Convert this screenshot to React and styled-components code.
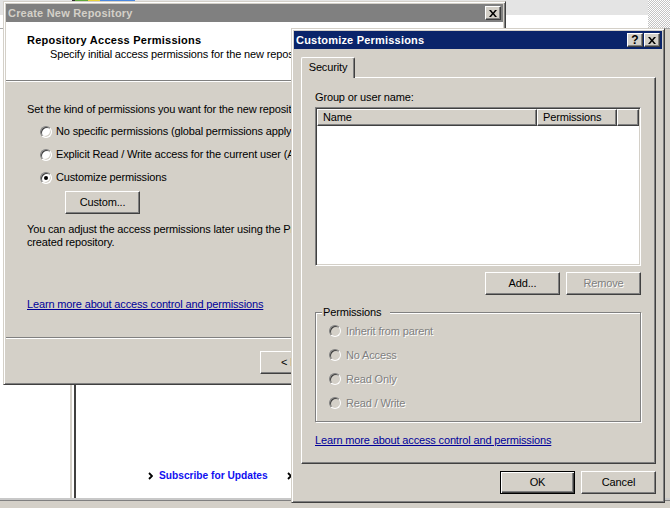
import React from 'react';
import styled, { createGlobalStyle } from 'styled-components';

const colors = {
  face: '#d4d0c8',
  shadow: '#808080',
  dark: '#404040',
  light: '#ffffff',
  navy: '#0a246a',
  link: '#000099',
  bright: '#1010f0',
};

const GlobalStyle = createGlobalStyle`
  html, body {
    margin: 0;
    padding: 0;
    background: ${colors.face};
  }
  body {
    font-family: 'Liberation Sans', Arial, sans-serif;
    font-size: 11px;
    line-height: 13px;
    letter-spacing: -0.15px;
    color: #000;
  }
  * {
    box-sizing: border-box;
  }
`;

const Desktop = styled.div`
  position: relative;
  width: 670px;
  height: 508px;
  overflow: hidden;
  background: ${colors.face};
`;

/* ---- application behind the dialogs ---- */

const Backdrop = styled.div`
  display: flex;
  flex-direction: column;
  height: 100%;
`;

const TopBand = styled.div`
  height: 29px;
  flex: none;
  display: flex;
  align-items: flex-start;
  background: linear-gradient(#e4e4e4 0 15px, #fff 15px);
  border-bottom: 1px solid #a8a8a8;
`;

const IconStrip = styled.div`
  margin-left: 72px;
  width: 63px;
  height: 3px;
  background: linear-gradient(90deg, #303030 0 3px, #5fa83a 3px 16px, #e8d23a 16px 28px, #4a88e0 28px);
`;

const Checker = styled.div`
  margin-left: auto;
  width: 22px;
  height: 100%;
  background: repeating-conic-gradient(#c4c4c4 0 25%, #fff 0 50%) 0 0 / 2px 2px;
`;

const BgBody = styled.div`
  flex: 1;
  display: flex;
  background: #fff;
  border-bottom: 2px solid #c8c8c8;
`;

const Sidebar = styled.div`
  width: 72px;
  flex: none;
  border-right: 2px solid ${colors.face};
  margin-right: 2px;
`;

const MainPane = styled.div`
  flex: 1;
  display: flex;
  align-items: flex-end;
  border-left: 2px solid ${colors.dark};
  padding: 0 0 16px 72px;
`;

const RightRail = styled.div`
  width: 5px;
  flex: none;
  background: ${colors.face};
`;

const StatusBand = styled.div`
  height: 8px;
  flex: none;
  background: ${colors.face};
  border-top: 1px solid ${colors.shadow};
`;

const Promo = styled.div`
  display: flex;
  align-items: center;
  gap: 6px;
`;

const PromoLink = styled.a`
  color: ${colors.bright};
  font-weight: bold;
  font-size: 10.2px;
  letter-spacing: 0;
  text-decoration: none;
  margin-right: 13px;
`;

const Chevron = () => (
  <svg width="5" height="8" viewBox="0 0 5 8">
    <polyline points="1,1 4,4 1,7" fill="none" stroke="#000" strokeWidth="1.8" />
  </svg>
);

/* ---- window chrome ---- */

const Window = styled.div`
  position: absolute;
  left: ${p => p.$x}px;
  top: ${p => p.$y}px;
  width: ${p => p.$w}px;
  height: ${p => p.$h}px;
  display: flex;
  flex-direction: column;
  padding: 2px;
  background: ${colors.face};
  border: 1px solid;
  border-color: ${colors.face} ${colors.dark} ${colors.dark} ${colors.face};
  box-shadow: inset 1px 1px ${colors.light}, inset -1px -1px ${colors.shadow};
`;

const TitleBar = styled.div`
  height: 18px;
  flex: none;
  display: flex;
  align-items: center;
  padding: 0 2px;
  background: ${p => (p.$active ? colors.navy : colors.shadow)};
  color: ${p => (p.$active ? '#fff' : colors.face)};
  font-weight: bold;
  letter-spacing: 0.2px;
`;

const TitleText = styled.span`
  flex: 1;
  white-space: nowrap;
  overflow: hidden;
`;

const CaptionButton = styled.span`
  width: 16px;
  height: 14px;
  display: flex;
  align-items: center;
  justify-content: center;
  background: ${colors.face};
  border: 1px solid;
  border-color: ${colors.light} ${colors.dark} ${colors.dark} ${colors.light};
  box-shadow: inset -1px -1px ${colors.shadow};
  color: #000;
  font-weight: bold;
  font-size: 12px;

  & + & {
    margin-left: 1px;
  }
`;

const CloseGlyph = () => (
  <svg width="8" height="7" viewBox="0 0 8 7">
    <path d="M0 0H2L4 2.4L6 0H8L5.1 3.5L8 7H6L4 4.6L2 7H0L2.9 3.5Z" fill="#000" />
  </svg>
);

const EtchedLine = styled.div`
  height: 2px;
  flex: none;
  border-top: 1px solid ${colors.shadow};
  border-bottom: 1px solid ${colors.light};
`;

/* ---- shared controls ---- */

const Button = styled.button`
  width: 75px;
  height: 23px;
  flex: none;
  padding: 0;
  font: inherit;
  letter-spacing: inherit;
  color: ${p => (p.disabled ? colors.shadow : '#000')};
  text-shadow: ${p => (p.disabled ? `1px 1px 0 ${colors.light}` : 'none')};
  background: ${colors.face};
  border: 1px solid;
  border-color: ${p =>
    p.$default ? '#000' : `${colors.light} ${colors.dark} ${colors.dark} ${colors.light}`};
  box-shadow: ${p =>
    p.$default
      ? `inset 1px 1px ${colors.light}, inset -1px -1px ${colors.dark}, inset -2px -2px ${colors.shadow}`
      : `inset -1px -1px ${colors.shadow}`};
`;

const RadioRow = styled.label`
  height: ${p => p.$h}px;
  display: flex;
  align-items: center;
  gap: ${p => p.$gap}px;
  color: ${p => (p.$disabled ? colors.shadow : '#000')};
  text-shadow: ${p => (p.$disabled ? `1px 1px 0 ${colors.light}` : 'none')};
`;

const RadioCircle = styled.span`
  width: 12px;
  height: 12px;
  flex: none;
  display: flex;
  align-items: center;
  justify-content: center;
  border-radius: 50%;
  border: 1px solid;
  border-color: ${colors.shadow} ${colors.light} ${colors.light} ${colors.shadow};
  box-shadow: inset 1px 1px ${colors.dark}, inset -1px -1px ${colors.face};
  background: ${p => (p.$disabled ? colors.face : '#fff')};

  &::after {
    content: '';
    display: ${p => (p.$checked ? 'block' : 'none')};
    width: 4px;
    height: 4px;
    border-radius: 50%;
    background: #000;
  }
`;

const Link = styled.a`
  color: ${colors.link};
  text-decoration: underline;
  margin-top: ${p => p.$top}px;
  align-self: flex-start;
  white-space: nowrap;
`;

const Radio = ({ label, checked, disabled, h, gap }) => (
  <RadioRow $disabled={disabled} $h={h} $gap={gap}>
    <RadioCircle $checked={checked} $disabled={disabled} />
    {label}
  </RadioRow>
);

/* ---- wizard (inactive) ---- */

const WizardHeader = styled.div`
  height: 58px;
  flex: none;
  background: #fff;
  padding: 11px 0 0 21px;
  white-space: nowrap;
`;

const HeaderTitle = styled.div`
  font-weight: bold;
  line-height: 14px;
  letter-spacing: 0.25px;
`;

const HeaderSub = styled.div`
  margin-top: 1px;
  margin-left: 23px;
`;

const WizardBody = styled.div`
  flex: 1;
  display: flex;
  flex-direction: column;
  padding: 21px 0 0 21px;
  white-space: nowrap;
`;

const RadioList = styled.div`
  display: flex;
  flex-direction: column;
  margin-top: ${p => p.$top || 0}px;
  padding-left: 13px;
`;

const CustomButton = styled(Button)`
  margin: 2px 0 0 38px;
`;

const Note = styled.p`
  margin: 9px 0 0;
`;

const WizardFooter = styled.div`
  height: 43px;
  flex: none;
  display: flex;
  align-items: flex-start;
  padding: 12px 0 0 254px;
`;

/* ---- customize permissions (active) ---- */

const DialogBody = styled.div`
  flex: 1;
  display: flex;
  flex-direction: column;
  padding: 8px 6px 6px 7px;
`;

const TabStrip = styled.div`
  height: 20px;
  display: flex;
`;

const Tab = styled.div`
  position: relative;
  z-index: 1;
  width: 54px;
  height: 21px;
  display: flex;
  align-items: center;
  justify-content: center;
  padding-bottom: 1px;
  background: ${colors.face};
  border: 1px solid;
  border-bottom: none;
  border-color: ${colors.light} ${colors.dark} ${colors.face} ${colors.light};
  border-radius: 2px 2px 0 0;
  box-shadow: inset -1px 0 ${colors.shadow};
`;

const TabPanel = styled.div`
  height: 387px;
  display: flex;
  flex-direction: column;
  padding: 13px 14px 0 13px;
  border: 1px solid;
  border-color: ${colors.light} ${colors.dark} ${colors.dark} ${colors.light};
  box-shadow: inset -1px -1px ${colors.shadow};
`;

const ListView = styled.div`
  margin-top: 3px;
  height: 159px;
  display: flex;
  flex-direction: column;
  background: #fff;
  border: 1px solid;
  border-color: ${colors.shadow} ${colors.light} ${colors.light} ${colors.shadow};
  box-shadow: inset 1px 1px ${colors.dark}, inset -1px -1px ${colors.face};
  padding: 1px;
`;

const ListHeader = styled.div`
  height: 17px;
  display: flex;
`;

const HeaderCell = styled.div`
  width: ${p => (p.$w ? `${p.$w}px` : 'auto')};
  flex: ${p => (p.$w ? 'none' : 1)};
  display: flex;
  align-items: center;
  padding-left: 5px;
  background: ${colors.face};
  border: 1px solid;
  border-color: ${colors.light} ${colors.dark} ${colors.dark} ${colors.light};
  box-shadow: inset -1px -1px ${colors.shadow};
`;

const ButtonRow = styled.div`
  display: flex;
  justify-content: flex-end;
  gap: 6px;
  margin-top: ${p => p.$top}px;
`;

const GroupBox = styled.fieldset`
  margin: 11px 0 0;
  padding: 0 0 6px;
  min-width: 0;
  border: 1px solid ${colors.shadow};
  box-shadow: inset 1px 1px ${colors.light}, 1px 1px ${colors.light};
`;

const Legend = styled.legend`
  margin-left: 6px;
  padding: 0 9px 0 1px;
  line-height: 13px;
  background: ${colors.face};
`;

const permissionChoices = ['Inherit from parent', 'No Access', 'Read Only', 'Read / Write'];

const App = () => {
  return (
    <Desktop>
      <GlobalStyle />

      <Backdrop>
        <TopBand>
          <IconStrip />
          <Checker />
        </TopBand>
        <BgBody>
          <Sidebar />
          <MainPane>
            <Promo>
              <Chevron />
              <PromoLink href="#">Subscribe for Updates</PromoLink>
              <Chevron />
            </Promo>
          </MainPane>
          <RightRail />
        </BgBody>
        <StatusBand />
      </Backdrop>

      <Window $x={3} $y={1} $w={503} $h={384}>
        <TitleBar>
          <TitleText>Create New Repository</TitleText>
          <CaptionButton>
            <CloseGlyph />
          </CaptionButton>
        </TitleBar>
        <WizardHeader>
          <HeaderTitle>Repository Access Permissions</HeaderTitle>
          <HeaderSub>Specify initial access permissions for the new repository.</HeaderSub>
        </WizardHeader>
        <EtchedLine />
        <WizardBody>
          <div>Set the kind of permissions you want for the new repository.</div>
          <RadioList $top={4}>
            <Radio h={23} gap={4} label="No specific permissions (global permissions apply)" />
            <Radio h={23} gap={4} label="Explicit Read / Write access for the current user (Administrator)" />
            <Radio h={23} gap={4} checked label="Customize permissions" />
          </RadioList>
          <CustomButton>Custom...</CustomButton>
          <Note>
            You can adjust the access permissions later using the Properties dialog of the newly
            <br />
            created repository.
          </Note>
          <Link href="#" $top={49}>
            Learn more about access control and permissions
          </Link>
        </WizardBody>
        <EtchedLine />
        <WizardFooter>
          <Button>&lt; Back</Button>
        </WizardFooter>
      </Window>

      <Window $x={291} $y={28} $w={374} $h={475}>
        <TitleBar $active>
          <TitleText>Customize Permissions</TitleText>
          <CaptionButton>?</CaptionButton>
          <CaptionButton>
            <CloseGlyph />
          </CaptionButton>
        </TitleBar>
        <DialogBody>
          <TabStrip>
            <Tab>Security</Tab>
          </TabStrip>
          <TabPanel>
            <div>Group or user name:</div>
            <ListView>
              <ListHeader>
                <HeaderCell $w={220}>Name</HeaderCell>
                <HeaderCell $w={80}>Permissions</HeaderCell>
                <HeaderCell />
              </ListHeader>
            </ListView>
            <ButtonRow $top={6}>
              <Button>Add...</Button>
              <Button disabled>Remove</Button>
            </ButtonRow>
            <GroupBox>
              <Legend>Permissions</Legend>
              <RadioList>
                {permissionChoices.map(choice => (
                  <Radio key={choice} h={24} gap={5} disabled label={choice} />
                ))}
              </RadioList>
            </GroupBox>
            <Link href="#" $top={12}>
              Learn more about access control and permissions
            </Link>
          </TabPanel>
          <ButtonRow $top={7}>
            <Button $default>OK</Button>
            <Button>Cancel</Button>
          </ButtonRow>
        </DialogBody>
      </Window>
    </Desktop>
  );
};

export default App;
